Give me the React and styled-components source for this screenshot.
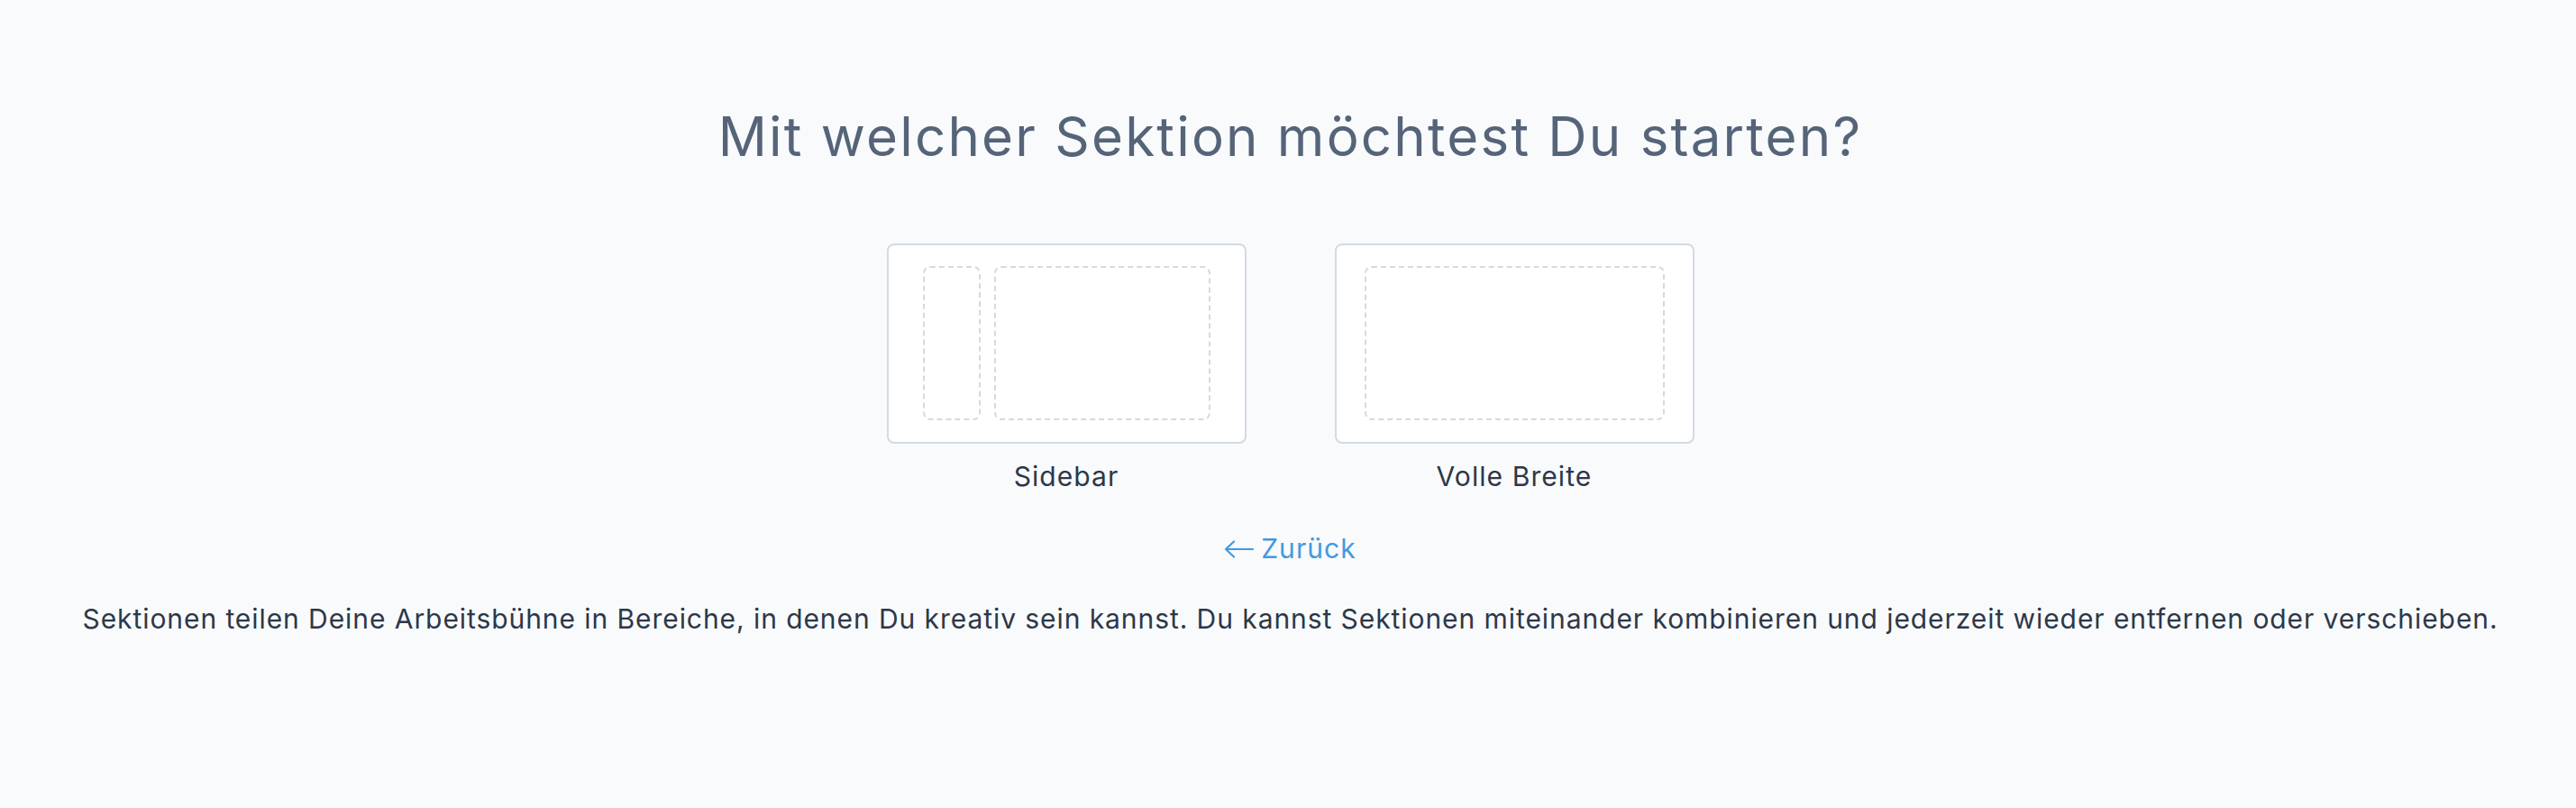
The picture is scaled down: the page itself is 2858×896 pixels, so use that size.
import React from "react";
import styled, { createGlobalStyle } from "styled-components";

const Global = createGlobalStyle`
  html, body { margin: 0; padding: 0; background: #f8fafc; }
  body { font-family: Inter, "Noto Sans", sans-serif; }
  * { box-sizing: border-box; }
`;

const Page = styled.main`
  min-height: 896px;
  display: flex;
  flex-direction: column;
  align-items: center;
  padding: 121px 0 0 5px;
  background: #f8fafc;
`;

const Title = styled.h1`
  margin: 0;
  font-size: 60px;
  line-height: 60px;
  font-weight: 400;
  color: #556478;
  letter-spacing: 0.037em;
`;

const Choices = styled.div`
  display: flex;
  gap: 98px;
  margin-top: 89px;
`;

const Choice = styled.button`
  display: flex;
  flex-direction: column;
  align-items: center;
  gap: 18px;
  background: none;
  border: 0;
  padding: 0;
  cursor: pointer;
  font-family: inherit;
`;

const Card = styled.div`
  width: 399px;
  height: 222px;
  background: #ffffff;
  border: 2px solid #d3dae3;
  border-radius: 8px;
  display: flex;
  gap: 15px;
  padding: 23px ${(p) => p.$padX}px 24px;
`;

const Slot = styled.div`
  flex: ${(p) => (p.$narrow ? "0 0 64px" : "1 1 auto")};
  border: 2px dashed #d2dae3;
  border-radius: 8px;
`;

const Label = styled.span`
  font-size: 30px;
  line-height: 36px;
  color: #2d3748;
  letter-spacing: 0.036em;
`;

const Back = styled.a`
  margin-top: 44px;
  display: flex;
  align-items: center;
  gap: 8px;
  font-size: 30px;
  line-height: 36px;
  color: #4299e1;
  letter-spacing: 0.036em;
  text-decoration: none;
  cursor: pointer;
`;

const Arrow = styled.svg`
  width: 33px;
  height: 20px;
  margin-top: 2px;
  flex: none;
`;

const Note = styled.p`
  margin: 42px 0 0;
  font-size: 30px;
  line-height: 36px;
  color: #2d3748;
  letter-spacing: 0.031em;
  white-space: nowrap;
`;

export default function App() {
  return (
    <>
      <Global />
      <Page>
        <Title>Mit welcher Sektion möchtest Du starten?</Title>
        <Choices>
          <Choice>
            <Card $padX={38}>
              <Slot $narrow />
              <Slot />
            </Card>
            <Label>Sidebar</Label>
          </Choice>
          <Choice>
            <Card $padX={31}>
              <Slot />
            </Card>
            <Label>Volle Breite</Label>
          </Choice>
        </Choices>
        <Back>
          <Arrow viewBox="0 0 33 20" fill="none" stroke="currentColor" strokeWidth="2.2" strokeLinecap="round" strokeLinejoin="round">
            <path d="M32 10H2M11 1.5L2 10l9 8.5" />
          </Arrow>
          Zurück
        </Back>
        <Note>
          Sektionen teilen Deine Arbeitsbühne in Bereiche, in denen Du kreativ sein kannst. Du kannst Sektionen miteinander kombinieren und jederzeit wieder entfernen oder verschieben.
        </Note>
      </Page>
    </>
  );
}
